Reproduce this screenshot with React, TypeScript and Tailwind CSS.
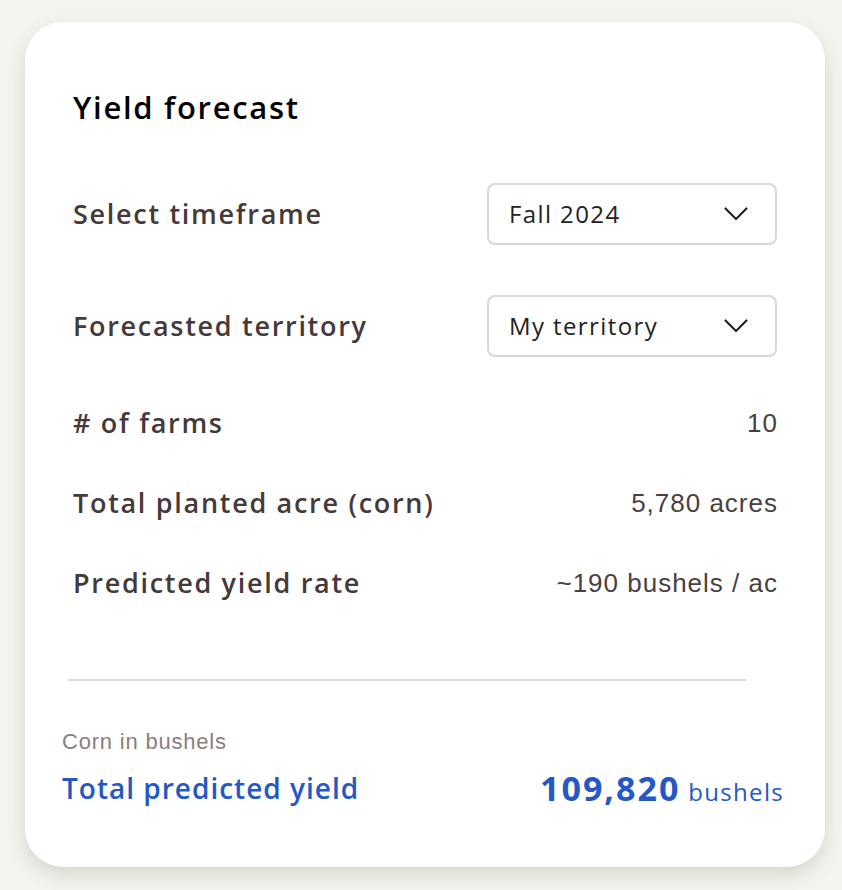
const labelFont = "font-['Open_Sans','Noto_Sans',sans-serif]";
const valueFont = "font-['Liberation_Sans','Arial',sans-serif]";

function Chevron() {
  return (
    <svg width="24" height="14" viewBox="0 0 24 14" fill="none" aria-hidden>
      <path d="M1.5 1.5 12 12 22.5 1.5" stroke="#222" strokeWidth="2.2" strokeLinecap="round" strokeLinejoin="round" />
    </svg>
  );
}

function SelectRow({ label, value }: { label: string; value: string }) {
  return (
    <div className="flex h-[62px] items-center justify-between">
      <span className={`${labelFont} text-[27px] font-semibold tracking-[1.7px] text-[#45393a]`}>{label}</span>
      <button className="flex h-[62px] w-[290px] items-center justify-between rounded-lg border-2 border-[#d3d9e2] bg-white pl-[20px] pr-[27px]">
        <span className={`${labelFont} text-[24px] tracking-[1.4px] text-[#222]`}>{value}</span>
        <Chevron />
      </button>
    </div>
  );
}

function StatRow({ label, value }: { label: string; value: string }) {
  return (
    <div className="flex h-10 items-center justify-between">
      <span className={`${labelFont} text-[27px] font-semibold tracking-[1.7px] text-[#45393a]`}>{label}</span>
      <span className={`${valueFont} -mr-[1px] text-[26px] tracking-[1px] text-[#4a4040]`}>{value}</span>
    </div>
  );
}

export default function App() {
  return (
    <div className="min-h-screen bg-[#f5f5ef] pl-[25px] pt-[22px]">
      <div className="h-[845px] w-[800px] rounded-[38px] bg-white shadow-[0_8px_20px_rgba(70,70,50,0.18)]">
        <div className="px-12 pt-[67px]">
          <h1 className={`${labelFont} text-[31px] font-semibold leading-9 tracking-[1.7px] text-black`}>
            Yield forecast
          </h1>
          <div className="mt-[58px] flex flex-col gap-[50px]">
            <SelectRow label="Select timeframe" value="Fall 2024" />
            <SelectRow label="Forecasted territory" value="My territory" />
          </div>
          <div className="mt-[46px] flex flex-col gap-10">
            <StatRow label="# of farms" value="10" />
            <StatRow label="Total planted acre (corn)" value="5,780 acres" />
            <StatRow label="Predicted yield rate" value="~190 bushels / ac" />
          </div>
        </div>
        <div className="ml-[43px] mt-[76px] h-[2px] w-[678px] bg-[#dcd7d8]" />
        <div className="pl-[37px] pr-[42px] pt-[49px]">
          <p className={`${valueFont} text-[22px] leading-6 tracking-[0.8px] text-[#8a7e7e]`}>Corn in bushels</p>
          <div className="mt-[14px] flex h-10 items-center justify-between text-[#2458c6]">
            <span className={`${labelFont} text-[28px] font-semibold tracking-[1px]`}>Total predicted yield</span>
            <span className={`${labelFont} -mr-[1px]`}>
              <span className="text-[34px] font-bold tracking-[2px]">109,820</span>
              <span className="ml-2 text-[24px] tracking-[1.3px]">bushels</span>
            </span>
          </div>
        </div>
      </div>
    </div>
  );
}
